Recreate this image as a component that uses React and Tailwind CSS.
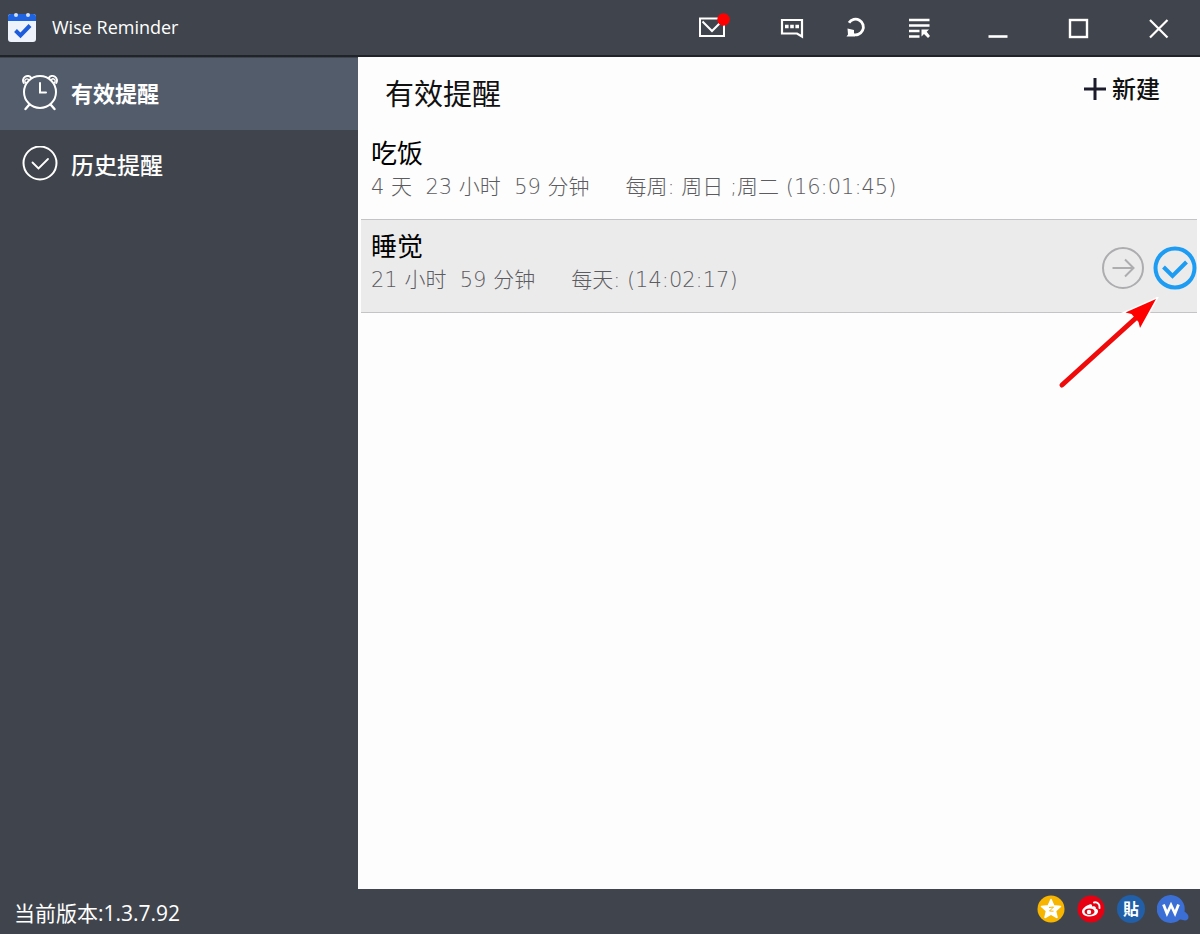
import React, { useState } from "react";

const reminders = [
  {
    id: 1,
    nombre: "吃饭",
    remaining: "4 天  23 小时  59 分钟",
    schedule: "每周: 周日 ;周二 (16:01:45)",
  },
  {
    id: 2,
    nombre: "睡觉",
    remaining: "21 小时  59 分钟",
    schedule: "每天: (14:02:17)",
  },
];

function AppLogo() {
  return (
    <svg className="w-7 h-8" viewBox="0 0 28 32" aria-hidden="true">
      <rect x="0" y="2" width="28" height="28" rx="3" fill="#eef2fb" />
      <path d="M0 9V5a3 3 0 0 1 3-3h22a3 3 0 0 1 3 3v4z" fill="#1f63e0" />
      <circle cx="8" cy="3" r="2" fill="#cfe0ff" />
      <circle cx="20" cy="3" r="2" fill="#cfe0ff" />
      <path d="M7.500 18.500l5 5L22 13.500" fill="none" stroke="#1b5bdc" strokeWidth="4" />
    </svg>
  );
}

function MailIcon() {
  return (
    <svg className="w-9 h-8" viewBox="0 0 36 32" fill="none" stroke="#fff" strokeWidth="2" aria-hidden="true">
      <rect x="6" y="6.500" width="24" height="17.500" />
      <path d="M8.500 9.500l9.500 9.500 9.500-9.500" />
      <circle cx="29.500" cy="7.500" r="6.200" fill="#ff0000" stroke="none" />
    </svg>
  );
}

function ChatIcon() {
  return (
    <svg className="w-6 h-6" viewBox="0 0 24 24" fill="none" stroke="#fff" strokeWidth="2.200" aria-hidden="true">
      <path d="M2 4h20v16.500l-5-3H2z" />
      <path d="M5 10.500h3.600M10.200 10.500h3.600M15.400 10.500h3.600" strokeWidth="3.600" />
    </svg>
  );
}

function RefreshIcon() {
  return (
    <svg className="w-6 h-6" viewBox="0 0 24 24" fill="none" stroke="#fff" strokeWidth="2.800" aria-hidden="true">
      <path d="M5 6.800A7.800 7.800 0 1 1 8.500 18.200" />
      <path d="M3.500 12.500l6.500 1.500v3l1 3.500H2.500l1.500-2z" fill="#fff" stroke="none" />
    </svg>
  );
}

function MenuIcon() {
  return (
    <svg className="w-6 h-6" viewBox="0 0 24 24" fill="none" stroke="#fff" strokeWidth="2.300" aria-hidden="true">
      <path d="M1 4h20.500M1 9.500h20.500M1 15h10.500M1 20.500h10.500" />
      <path d="M13.500 13.500h7.500l-2.300 2.300 3.300 4.200-2 2-4-4-2.500 2.500z" fill="#fff" stroke="none" />
    </svg>
  );
}

function ClockIcon() {
  return (
    <svg className="w-9 h-10" viewBox="0 0 36 40" fill="none" stroke="#fff" strokeWidth="2" strokeLinecap="round" aria-hidden="true">
      <circle cx="18" cy="18" r="16" />
      <path d="M18 9v9.500h6" />
      <path d="M7 31l-3.500 4M29 31l3.500 4" strokeWidth="2.400" />
      <path d="M1.800 9a4.200 4.200 0 0 1 7.500-5M34.200 9a4.200 4.200 0 0 0-7.500-5" />
      <path d="M3.500 8.500a2 2 0 0 1 3-3M32.500 8.500a2 2 0 0 0-3-3" strokeWidth="1.200" />
    </svg>
  );
}

function HistoryIcon() {
  return (
    <svg className="w-9 h-10" viewBox="0 0 36 40" fill="none" stroke="#fff" strokeWidth="2" strokeLinecap="round" aria-hidden="true">
      <circle cx="18" cy="17" r="16.500" />
      <path d="M10.500 16.500l6 6 9.500-9.500" strokeWidth="1.800" />
    </svg>
  );
}

const tabs = [
  { key: "active", label: "有效提醒", icon: <ClockIcon />, text: "text-[22px] font-bold" },
  { key: "history", label: "历史提醒", icon: <HistoryIcon />, text: "text-[23px] font-medium" },
];

function TitleBar() {
  return (
    <header className="flex items-center h-[57px] border-b-2 border-[#20232a] pl-2 pr-[2px]">
      <AppLogo />
      <h1 className="ml-4 pb-px flex-1 text-[18px] leading-6">Wise Reminder</h1>
      <button className="w-16 flex justify-center" title="消息"><MailIcon /></button>
      <button className="w-16 ml-4 flex justify-center" title="反馈"><ChatIcon /></button>
      <button className="w-16 flex justify-center" title="更新"><RefreshIcon /></button>
      <button className="w-16 mr-[6px] flex justify-center" title="菜单"><MenuIcon /></button>
      <button className="w-20 flex justify-center" title="最小化">
        <svg className="w-6 h-6" viewBox="0 0 24 24" stroke="#fff" strokeWidth="2.600"><path d="M2.500 20.500h19" /></svg>
      </button>
      <button className="w-20 flex justify-center" title="最大化">
        <svg className="w-6 h-6" viewBox="0 0 24 24" fill="none" stroke="#fff" strokeWidth="2.400"><rect x="4" y="4" width="17" height="17" /></svg>
      </button>
      <button className="w-20 flex justify-center" title="关闭">
        <svg className="w-6 h-6" viewBox="0 0 24 24" stroke="#fff" strokeWidth="2.200"><path d="M4 4l17.500 17.500M21.500 4L4 21.500" /></svg>
      </button>
    </header>
  );
}

function Sidebar({ activeTab, setActiveTab }) {
  return (
    <nav className="w-[358px] shrink-0 pt-px">
      {tabs.map((tab) => (
        <button
          key={tab.key}
          onClick={() => setActiveTab(tab.key)}
          className={`w-full h-[72px] flex items-center gap-[13px] pl-[22px] pb-px ${activeTab === tab.key ? "bg-[#535c6b]" : ""}`}
        >
          {tab.icon}
          <span className={tab.text}>{tab.label}</span>
        </button>
      ))}
    </nav>
  );
}

function ReminderRow({ item, selected, onSelect }) {
  return (
    <li
      onClick={() => onSelect(item.id)}
      className={`relative flex items-center border-b border-[#c4c4c6] h-[93px] pl-[10px] ${selected ? "bg-[#ebebec]" : ""}`}
    >
      <div className="flex-1 pb-2">
        <h3 className="text-[26px] leading-9 text-black">{item.nombre}</h3>
        <p className="flex gap-9 whitespace-pre font-['DejaVu_Sans','Noto_Sans_CJK_SC',sans-serif] text-[21px] leading-8 font-light text-[#5c5c60]">
          <span>{item.remaining}</span>
          <span>{item.schedule}</span>
        </p>
      </div>
      {selected && (
        <div className="flex gap-2 pt-[3px]">
          <button title="跳过">
            <svg className="w-11 h-11" viewBox="0 0 44 44" fill="none" stroke="#adadb0" strokeWidth="2">
              <circle cx="22" cy="22" r="20" />
              <path d="M11.500 22h21M24 13.500l8.500 8.500-8.500 8.500" />
            </svg>
          </button>
          <button title="完成">
            <svg className="w-11 h-11" viewBox="0 0 44 44" fill="none" stroke="#1c9cf2" strokeWidth="4">
              <circle cx="22" cy="22" r="19.500" />
              <path d="M10.500 21l9 9L33.500 16" />
            </svg>
          </button>
          <svg className="absolute right-9 top-[77px] w-[104px] h-[92px] pointer-events-none" viewBox="0 0 104 92" aria-hidden="true">
            <path d="M5 88L80 20" stroke="#fff" strokeWidth="8" strokeLinecap="round" />
            <path d="M99 2L68.500 15.500l6 1.500 7 8 1.500 6z" fill="#f00" stroke="#fff" strokeWidth="3" />
            <path d="M5 88L80 20" stroke="#f00a0a" strokeWidth="5" strokeLinecap="round" />
            <path d="M99 2L68.500 15.500l6 1.500 7 8 1.500 6z" fill="#f00" />
          </svg>
        </div>
      )}
    </li>
  );
}

function StatusBar() {
  return (
    <footer className="flex items-center justify-between h-[45px] pl-[14px] pr-[11px]">
      <span className="pt-[2px] text-[21px] leading-7">当前版本:1.3.7.92</span>
      <div className="flex gap-3 pb-[5px]">
        <a href="#qzone" title="QQ空间">
          <svg className="w-7 h-7" viewBox="0 0 28 28">
            <circle cx="14" cy="14" r="13.500" fill="#f7b500" />
            <path d="M14 4.500l2.800 6.200 6.700.7-5 4.500 1.500 6.600-6-3.400-6 3.400 1.500-6.600-5-4.500 6.700-.7z" fill="#fff" stroke="#fff" strokeWidth="1.500" strokeLinejoin="round" />
            <path d="M12 12.500l4.500-.5-4 4 4 .2" fill="none" stroke="#f7b500" strokeWidth="1" />
          </svg>
        </a>
        <a href="#weibo" title="微博">
          <svg className="w-7 h-7" viewBox="0 0 28 28">
            <circle cx="14" cy="14" r="13.500" fill="#e60012" />
            <path d="M12.500 9.500c1.800-.7 3 .2 2.500 2 2.500-.9 4.500 0 3.700 2.100 1.500.4 2.300 1.400 2.300 2.700 0 3-3.500 5.200-8 5.200s-8-2-8-5c0-2.900 4.500-6.200 7.500-7z" fill="#fff" />
            <ellipse cx="12.500" cy="16.700" rx="5" ry="3.300" fill="#e60012" />
            <circle cx="12" cy="17" r="2.200" fill="#fff" />
            <path d="M17 7.500c3.500-.7 6.200 1.800 5.500 5.500" fill="none" stroke="#fff" strokeWidth="2" strokeLinecap="round" />
          </svg>
        </a>
        <a href="#tieba" title="贴吧" className="w-7 h-7 rounded-full bg-[#215fa8] flex items-center justify-center text-base leading-4 font-bold">
          貼
        </a>
        <a href="#wise" title="Wise">
          <svg className="w-8 h-7" viewBox="0 0 32 28">
            <path d="M14 0a14 14 0 0 1 13.500 16.500c1 1 4 2.500 4 5.500 0 3-3 4-5.500 3-1-.4-2-.8-3-.5A14 14 0 1 1 14 0z" fill="#3b6fd6" />
            <path d="M6.500 9.500l3.500 9 4-8.500 4 8.500 3.500-9" fill="none" stroke="#fff" strokeWidth="2.800" />
          </svg>
        </a>
      </div>
    </footer>
  );
}

export default function App() {
  const [activeTab, setActiveTab] = useState("active");
  const [selectedId, setSelectedId] = useState(2);

  return (
    <div className="min-h-screen flex flex-col bg-[#40454d] text-white font-['Open_Sans','Noto_Sans_CJK_SC',sans-serif]">
      <TitleBar />
      <div className="flex-1 flex">
        <Sidebar activeTab={activeTab} setActiveTab={setActiveTab} />
        <main className="flex-1 bg-[#fdfdfd]">
          <div className="flex items-start justify-between h-[70px] pl-[27px] pr-10 pt-4 text-[#111]">
            <h2 className="pt-px text-[29px] leading-10">{tabs.find((tab) => tab.key === activeTab).label}</h2>
            <button className="flex items-center gap-[6px] text-[24px] leading-8 font-medium">
              <svg className="w-[22px] h-[22px]" viewBox="0 0 22 22" stroke="#1b1b2b" strokeWidth="3" aria-hidden="true">
                <path d="M11 0v22M0 11h22" />
              </svg>
              新建
            </button>
          </div>
          <ul className="pl-[3px] pr-[3px]">
            {reminders.map((item) => (
              <ReminderRow key={item.id} item={item} selected={item.id === selectedId} onSelect={setSelectedId} />
            ))}
          </ul>
        </main>
      </div>
      <StatusBar />
    </div>
  );
}
